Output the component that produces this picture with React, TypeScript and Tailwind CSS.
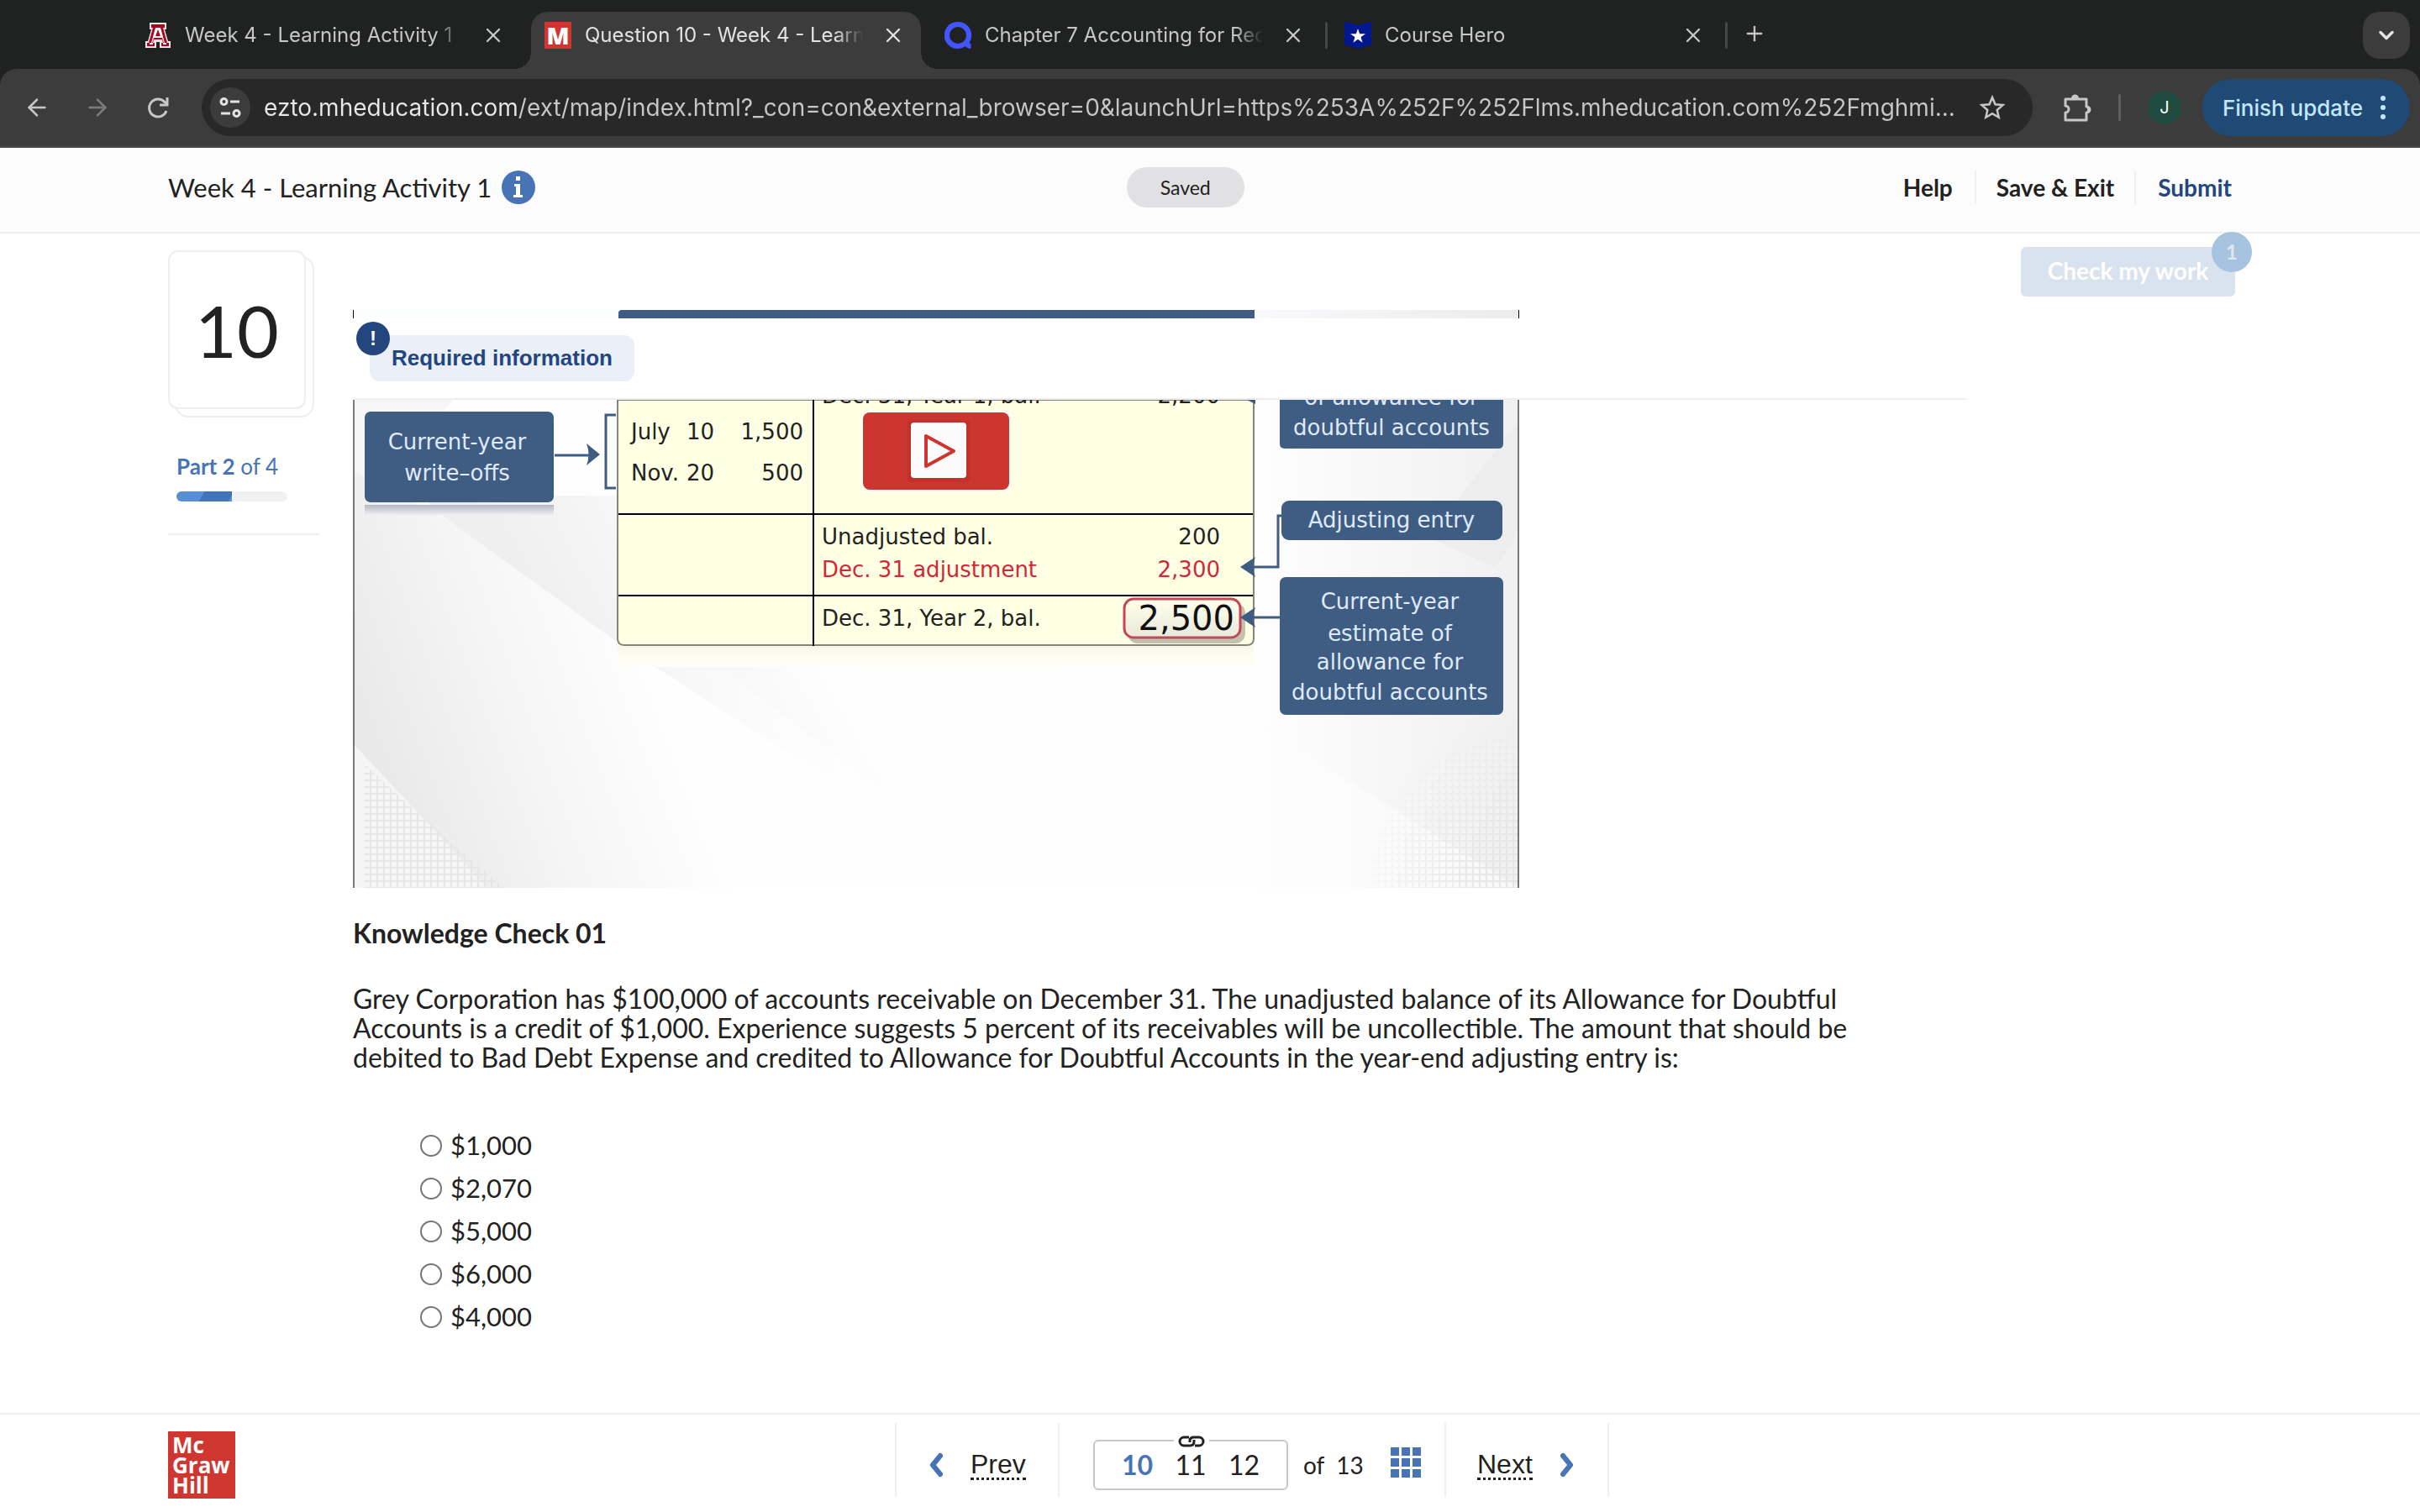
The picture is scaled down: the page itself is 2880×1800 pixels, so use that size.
import React, { useState } from 'react';
import { Plus, X, ChevronDown, ArrowLeft, ArrowRight } from 'lucide-react';

const PAGE_URL =
  'ezto.mheducation.com/ext/map/index.html?_con=con&external_browser=0&launchUrl=https%253A%252F%252Flms.mheducation.com%252Fmghmi...';

const CHOICES = ['$1,000', '$2,070', '$5,000', '$6,000', '$4,000'];

function ArizonaIcon() {
  return (
    <svg viewBox="0 0 32 32" className="h-8 w-8 shrink-0">
      <path d="M6 1h20v8h-2l4 14h3v8H18v-7h-4v7H1v-8h3L8 9H6z" fill="#e9e9e9" />
      <path d="M8 3h16v4h-2l5 18h2v4h-9v-4h2l-1-4H11l-1 4h2v4H3v-4h2L10 7H8z" fill="#ab0520" />
      <path d="M13 7h6l5 18h2v2h-4v-2h1l-2-6H11l-2 6h1v2H6v-2h2z" fill="#fff" />
      <path d="M16 9l3 8h-6z" fill="#ab0520" />
    </svg>
  );
}

function McGrawIcon() {
  return (
    <span className="flex h-8 w-8 shrink-0 items-center justify-center bg-[#cf3630] font-['Open_Sans',sans-serif] text-[28px] leading-8 font-extrabold text-white">
      M
    </span>
  );
}

function QuizletIcon() {
  return (
    <svg viewBox="0 0 32 32" className="h-8 w-8 shrink-0" fill="#4255ff">
      <path fillRule="evenodd" d="M16 0a16 16 0 1 0 9 29c1.500 2 3.500 3 6.500 3v-6c-1 0-1.500-.4-2-1.200A16 16 0 0 0 16 0zm0 6a10 10 0 1 1 0 20 10 10 0 0 1 0-20z" />
    </svg>
  );
}

function CourseHeroIcon() {
  return (
    <svg viewBox="0 0 32 32" className="h-8 w-8 shrink-0">
      <path d="M0 0l16 4 16-4v27l-16 5-16-5z" fill="#00178f" />
      <path d="M16 8l2.100 6.200H25l-5.500 4 2.100 6.500-5.600-4-5.600 4 2.100-6.500-5.500-4h6.900z" fill="#fff" />
    </svg>
  );
}

const TABS = [
  { title: 'Week 4 - Learning Activity 1', icon: <ArizonaIcon />, active: false, divider: false },
  { title: 'Question 10 - Week 4 - Learning', icon: <McGrawIcon />, active: true, divider: false },
  { title: 'Chapter 7 Accounting for Receivables', icon: <QuizletIcon />, active: false, divider: true },
  { title: 'Course Hero', icon: <CourseHeroIcon />, active: false, divider: true },
];

function TabStrip() {
  return (
    <div className="flex h-[82px] items-end pr-3 pl-[156px]">
      {TABS.map((tab) => (
        <React.Fragment key={tab.title}>
          <div
            className={`relative flex h-[68px] min-w-0 flex-1 max-w-[464px] items-center pr-[19px] pb-3 pl-4 ${
              tab.active ? 'rounded-t-[20px] bg-[#3c3c3c] text-[#e3e3e3]' : 'text-[#c7c7c7]'
            }`}
          >
            {tab.active && (
              <>
                <span className="absolute bottom-0 -left-5 h-5 w-5 bg-[radial-gradient(circle_at_0_0,transparent_20px,#3c3c3c_20px)]" />
                <span className="absolute -right-5 bottom-0 h-5 w-5 bg-[radial-gradient(circle_at_100%_0,transparent_20px,#3c3c3c_20px)]" />
              </>
            )}
            {tab.icon}
            <button className="ml-4 min-w-0 flex-1 overflow-hidden mask-r-from-90% text-left text-2xl whitespace-nowrap">{tab.title}</button>
            <button aria-label="Close tab" className="ml-[22px]">
              <X className="h-7 w-7" strokeWidth={2} />
            </button>
          </div>
          <span className="flex h-[68px] w-3 items-center justify-center pb-3">
            {tab.divider && <span className="h-8 w-[3px] rounded bg-[#444746]" />}
          </span>
        </React.Fragment>
      ))}
      <button aria-label="New tab" className="flex h-[68px] w-14 items-center justify-center pb-4 text-[#c7c7c7]">
        <Plus className="h-7 w-7" strokeWidth={2} />
      </button>
      <button aria-label="Search tabs" className="mb-3 ml-auto flex h-14 w-14 items-center justify-center rounded-[20px] bg-[#3c3c3c] text-[#e3e3e3]">
        <ChevronDown className="h-7 w-7" strokeWidth={3} />
      </button>
    </div>
  );
}

function Toolbar() {
  const [url, setUrl] = useState(PAGE_URL);

  return (
    <div className="flex h-[94px] items-center rounded-t-[20px] border-b-2 border-[#4a4a4a] bg-[#3c3c3c] pr-3 pl-7 text-[#c7c7c7]">
      <div className="flex items-center gap-10">
        <button aria-label="Back"><ArrowLeft className="h-8 w-8" strokeWidth={2} /></button>
        <button aria-label="Forward" className="text-[#7c7c7c]"><ArrowRight className="h-8 w-8" strokeWidth={2} /></button>
        <button aria-label="Reload">
          <svg viewBox="0 0 32 32" className="h-8 w-8" fill="none" stroke="currentColor" strokeWidth="3">
            <path d="M26 20a10.500 10.500 0 1 1-2-10.500L27 12" />
            <path d="M27 4v9h-9" />
          </svg>
        </button>
      </div>

      <div className="ml-9 flex h-[68px] flex-1 items-center rounded-full bg-[#282828] pr-8 pl-[10px]">
        <button aria-label="Site information" className="flex h-12 w-12 items-center justify-center rounded-full bg-[#3c3c3c]">
          <svg viewBox="0 0 28 28" className="h-7 w-7" fill="none" stroke="#e3e3e3" strokeWidth="3">
            <circle cx="6.500" cy="7" r="3.500" />
            <path d="M14 7h11M3 21h11" />
            <circle cx="21.500" cy="21" r="3.500" />
          </svg>
        </button>
        <input
          aria-label="Address"
          value={url}
          onChange={(e) => setUrl(e.target.value)}
          className="ml-4 min-w-0 flex-1 bg-linear-to-r from-[#e8e8e8] from-[301px] to-[#c7c7c7] to-[301px] bg-clip-text text-[28px] text-transparent outline-none"
        />
        <button aria-label="Bookmark this tab" className="ml-4">
          <svg viewBox="0 0 32 32" className="h-8 w-8" fill="none" stroke="#c7c7c7" strokeWidth="2.500">
            <path d="M16 4l3.500 8.300 9 .8-6.800 5.900 2 8.800L16 23.200l-7.700 4.600 2-8.800-6.800-5.900 9-.8z" />
          </svg>
        </button>
      </div>

      <button aria-label="Extensions" className="ml-9">
        <svg viewBox="0 0 34 34" className="h-[34px] w-[34px]" fill="none" stroke="#c7c7c7" strokeWidth="3" strokeLinejoin="round">
          <path d="M3 7h25v9a3.500 3.500 0 0 1 0 7v9H3v-9a4 4 0 0 0 0-8z" />
          <path d="M10 6a4.500 4.500 0 0 1 9 0zM29 15a4.500 4.500 0 0 1 0 9z" fill="#c7c7c7" stroke="none" />
        </svg>
      </button>
      <span className="ml-8 h-8 w-[3px] rounded bg-[#5f5f5f]" />
      <button aria-label="Profile" className="ml-8 flex h-10 w-10 items-center justify-center rounded-full bg-[#1f4c3f] text-xl text-white">J</button>
      <button className="ml-[25px] flex h-[68px] items-center gap-5 rounded-full bg-[#1f4a75] pr-7 pl-6 text-[26px] font-medium whitespace-nowrap text-[#c2e7ff]">
        Finish update
        <svg viewBox="0 0 8 30" className="h-[30px] w-2" fill="currentColor">
          <circle cx="4" cy="4" r="3" />
          <circle cx="4" cy="15" r="3" />
          <circle cx="4" cy="26" r="3" />
        </svg>
      </button>
    </div>
  );
}

function AssignmentHeader() {
  return (
    <header className="grid h-[102px] grid-cols-[49fr_auto_51fr] items-center border-b-2 border-[#f0f0f0] bg-[#fcfcfc] pr-[212px] pb-[6px] pl-[200px]">
      <div className="flex items-center gap-3">
        <h1 className="text-[31px] leading-10">Week 4 - Learning Activity 1</h1>
        <button aria-label="Assignment information" className="flex h-10 w-10 items-center justify-center rounded-full bg-[#4874b5]">
          <svg viewBox="0 0 14 28" className="h-7 w-[14px]" fill="#fff">
            <path d="M4 1h5v5H4zM2 10h7v13h3v3H1v-3h3V13H2z" />
          </svg>
        </button>
      </div>
      <span className="flex h-[48px] w-[140px] items-center justify-center rounded-full bg-[#e1e0e3] text-[23px]">Saved</span>
      <nav className="flex items-center justify-end text-[28px] leading-10 font-bold">
        <button className="px-[26px]">Help</button>
        <button className="border-x-2 border-[#f0f0f0] px-6">Save &amp; Exit</button>
        <button className="pr-3 pl-[26px] text-[#23467f]">Submit</button>
      </nav>
    </header>
  );
}

function QuestionCard() {
  return (
    <aside className="w-[180px] shrink-0 pt-5">
      <div className="relative h-[199px] w-[174px]">
        <div className="absolute right-0 bottom-0 h-[192px] w-[166px] rounded-2xl border-2 border-[#eeeeee]" />
        <div className="absolute top-0 left-0 flex h-[189px] w-[164px] items-center justify-center rounded-xl border-2 border-[#eeeeee] bg-white text-[86px]">
          10
        </div>
      </div>
      <div className="border-b-2 border-[#eeeeee] px-[10px] pt-10 pb-[38px]">
        <p className="text-[26px] leading-9 text-[#4874b5]"><b>Part 2</b> of 4</p>
        <div className="mt-3 h-3 w-[132px] overflow-hidden rounded-full bg-[#f1f1f1]">
          <div className="h-full w-1/2 bg-[linear-gradient(120deg,#568fd3_46%,#4175b8_46%,#4175b8_94%,#568fd3_94%)]" />
        </div>
      </div>
    </aside>
  );
}

function Slide() {
  return (
    <svg viewBox="420 476 1388 581" className="block w-[1388px] max-w-full font-['DejaVu_Sans',sans-serif] text-[26px]">
      <defs>
        <linearGradient id="floor" gradientUnits="userSpaceOnUse" x1="440" y1="880" x2="760" y2="760">
          <stop offset="0" stopColor="#e9e9e9" />
          <stop offset="0.5" stopColor="#f5f5f5" />
          <stop offset="1" stopColor="#fefefe" />
        </linearGradient>
        <linearGradient id="beam" gradientUnits="userSpaceOnUse" x1="620" y1="690" x2="860" y2="560">
          <stop offset="0" stopColor="#efefef" />
          <stop offset="1" stopColor="#fefefe" />
        </linearGradient>
        <linearGradient id="beamEnd" gradientUnits="userSpaceOnUse" x1="735" y1="765" x2="1050" y2="980">
          <stop offset="0" stopColor="#fefefe" stopOpacity="0" />
          <stop offset="1" stopColor="#fefefe" />
        </linearGradient>
        <linearGradient id="side" x1="0" y1="0" x2="1" y2="0">
          <stop offset="0" stopColor="#fefefe" />
          <stop offset="1" stopColor="#f0f0f0" />
        </linearGradient>
        <linearGradient id="reflect" x1="0" y1="0" x2="0" y2="1">
          <stop offset="0" stopColor="#b4b6c2" />
          <stop offset="1" stopColor="#f4f4f6" />
        </linearGradient>
        <linearGradient id="fade" x1="0" y1="0" x2="0" y2="1">
          <stop offset="0" stopColor="#f6f6ea" />
          <stop offset="0.5" stopColor="#fdfdf2" />
          <stop offset="1" stopColor="#fefef8" />
        </linearGradient>
        <linearGradient id="total" x1="0" y1="0" x2="0" y2="1">
          <stop offset="0" stopColor="#ffffea" />
          <stop offset="1" stopColor="#e9e9dc" />
        </linearGradient>
        <pattern id="mesh" width="8" height="8" patternUnits="userSpaceOnUse">
          <path d="M0 1h8M1 0v8" stroke="#e6e6e6" strokeWidth="2" />
        </pattern>
        <radialGradient id="meshFade" gradientUnits="userSpaceOnUse" cx="1830" cy="1057" r="210">
          <stop offset="0.3" stopColor="#fff" />
          <stop offset="1" stopColor="#000" />
        </radialGradient>
        <mask id="meshMask">
          <rect x="1600" y="840" width="208" height="217" fill="url(#meshFade)" />
        </mask>
      </defs>

      {/* backdrop */}
      <rect x="420" y="476" width="1388" height="581" fill="#fefefe" />
      <path d="M420 476h120l-120 120z" fill="#f6f6f7" />
      <path d="M500 590h240L1100 830V1000L735 765 530 617z" fill="url(#beam)" />
      <path d="M735 700L1200 1057H735z" fill="url(#beamEnd)" />
      <path d="M420 560L530 617L735 765L1000 1057H420z" fill="url(#floor)" />
      <path d="M420 885Q500 970 580 1057H420z" fill="#f5f5f5" />
      <path d="M434 910Q520 990 600 1057H434z" fill="url(#mesh)" />
      <rect x="1494" y="476" width="314" height="581" fill="url(#side)" />
      <path d="M1700 640L1808 500v130L1780 676z" fill="#ebebec" opacity="0.7" />
      <path d="M1494 860L1808 1057H1494z" fill="#fefefe" opacity="0.6" />
      <rect x="1600" y="840" width="208" height="217" fill="url(#mesh)" mask="url(#meshMask)" />

      {/* T-account */}
      <rect x="735" y="769" width="757" height="25" fill="url(#fade)" />
      <path d="M735 476V760q0 8 8 8H1484q8 0 8-8V476z" fill="#ffffe3" stroke="#85857c" strokeWidth="2" />
      <path d="M736 612H1491M736 709H1491M968 476V769" stroke="#000" strokeWidth="2" />

      <g fill="#222">
        <text x="978" y="480">Dec. 31, Year 1, bal.</text>
        <text x="1452" y="480" textAnchor="end">2,200</text>
        <text x="751" y="523">July</text>
        <text x="850" y="523" textAnchor="end">10</text>
        <text x="956" y="523" textAnchor="end">1,500</text>
        <text x="751" y="572">Nov.</text>
        <text x="850" y="572" textAnchor="end">20</text>
        <text x="956" y="572" textAnchor="end">500</text>
        <text x="978" y="648">Unadjusted bal.</text>
        <text x="1452" y="648" textAnchor="end">200</text>
        <text x="978" y="745">Dec. 31, Year 2, bal.</text>
      </g>
      <g fill="#cf2a37">
        <text x="978" y="687">Dec. 31 adjustment</text>
        <text x="1452" y="687" textAnchor="end">2,300</text>
      </g>

      <rect x="1342" y="718" width="140" height="48" rx="12" fill="#85857c" opacity="0.5" />
      <rect x="1338" y="713" width="138" height="46" rx="11" fill="url(#total)" stroke="#c4485a" strokeWidth="3" />
      <text x="1469" y="750" textAnchor="end" fontSize="40" fill="#111">2,500</text>

      {/* callouts */}
      <g fill="#3f5c82">
        <rect x="434" y="490" width="225" height="108" rx="7" />
        <path d="M1523 476h266v52q0 6-6 6h-254q-6 0-6-6z" />
        <rect x="1525" y="596" width="263" height="47" rx="9" />
        <rect x="1523" y="687" width="266" height="164" rx="7" />
        <path d="M714 541l-16-13q5 13 0 26z" />
        <path d="M1476 675l18-12q-5 12 0 24z" />
        <path d="M1476 735l18-12q-5 12 0 24z" />
        <path d="M1484 476h10v5z" />
      </g>
      <rect x="434" y="601" width="225" height="13" fill="url(#reflect)" />
      <g fill="none" stroke="#3f5c82" strokeWidth="3">
        <path d="M660 542h44M733 494H721V581H733M1525 614H1521V675H1486M1523 735H1486" />
      </g>
      <g fill="#dfeafa" textAnchor="middle">
        <text x="544" y="535">Current-year</text>
        <text x="544" y="572">write–offs</text>
        <text x="1656" y="482">of allowance for</text>
        <text x="1656" y="518">doubtful accounts</text>
        <text x="1656" y="628">Adjusting entry</text>
        <text x="1654" y="725">Current-year</text>
        <text x="1654" y="763">estimate of</text>
        <text x="1654" y="797">allowance for</text>
        <text x="1654" y="833">doubtful accounts</text>
      </g>

      {/* play button */}
      <rect x="1025" y="489" width="178" height="96" rx="9" fill="#fff" />
      <rect x="1027" y="491" width="174" height="92" rx="8" fill="#cd352f" />
      <rect x="1080" y="500" width="74" height="74" rx="4" fill="#b8302b" opacity="0.5" />
      <rect x="1084" y="503" width="66" height="66" rx="4" fill="#fbfbfb" />
      <path d="M1102 519v36l33-18z" fill="none" stroke="#cd352f" strokeWidth="4" strokeLinejoin="round" />

      <path d="M421 476V1057M1807 476V1057" stroke="#000" strokeWidth="1" />
    </svg>
  );
}

function Question() {
  const [answer, setAnswer] = useState('');

  return (
    <article className="min-w-0 flex-1 pt-[91px]">
      {/* sliver of the slide above the pinned notice */}
      <div className="flex h-[10px] w-[1388px] max-w-full border-x border-black">
        <span className="flex-[315] bg-[#fcfdfd]" />
        <span className="flex-[757] rounded-tl-sm bg-[#3f5c82]" />
        <span className="flex-[314] bg-linear-to-r from-[#f8f9fb] to-[#ececec]" />
      </div>

      <div className="h-[97px] border-b-2 border-[#eeeeee] bg-white pt-5 pl-5">
        <div className="relative flex h-[55px] w-[315px] items-center rounded-xl bg-[#ebf0f8] pl-[26px] font-['Liberation_Sans',sans-serif] text-[26px] font-bold text-[#23467f]">
          <span className="absolute -top-4 -left-4 flex h-10 w-10 items-center justify-center rounded-full bg-[#23467f] text-2xl text-white">!</span>
          Required information
        </div>
      </div>

      <Slide />

      <h2 className="mt-[34px] text-[32px] leading-10 font-bold">Knowledge Check 01</h2>
      <p className="mt-10 text-[32px] leading-[35px]">
        Grey Corporation has $100,000 of accounts receivable on December 31. The unadjusted balance of its Allowance for Doubtful
        <br />
        Accounts is a credit of $1,000. Experience suggests 5 percent of its receivables will be uncollectible. The amount that should be
        <br />
        debited to Bad Debt Expense and credited to Allowance for Doubtful Accounts in the year-end adjusting entry is:
      </p>

      <div role="radiogroup" aria-label="Answer choices" className="mt-[62px] pb-[60px] pl-20">
        {CHOICES.map((choice) => (
          <label key={choice} className="flex h-[51px] items-center gap-[10px] text-[31px]">
            <input
              type="radio"
              name="answer"
              value={choice}
              checked={answer === choice}
              onChange={() => setAnswer(choice)}
              className="h-[26px] w-[26px] appearance-none rounded-full border-2 border-[#767676] bg-white checked:border-8"
            />
            {choice}
          </label>
        ))}
      </div>
    </article>
  );
}

function Footer() {
  return (
    <footer className="grid h-[118px] grid-cols-[1fr_auto_1fr] items-start border-t-2 border-[#f0f0f0] bg-white pt-[10px] pr-[100px] pl-[200px]">
      <div className="mt-[10px] flex h-20 w-20 flex-col justify-center bg-[#cf3630] pl-[5px] font-['Open_Sans',sans-serif] text-[26px] leading-6 font-bold text-white">
        <span>Mc</span>
        <span>Graw</span>
        <span>Hill</span>
      </div>

      <nav className="flex h-[88px] items-stretch border-x-2 border-[#f0f0f0] text-[32px]">
        <a href="#prev" className="flex w-[192px] items-center gap-8 pt-3 pl-[38px] font-['Liberation_Sans',sans-serif]">
          <svg viewBox="0 0 18 30" className="h-[30px] w-[18px]" fill="none" stroke="#4874b5" strokeWidth="6" strokeLinecap="round" strokeLinejoin="round">
            <path d="M14 4L5 15l9 11" />
          </svg>
          <span className="border-b-3 border-dotted border-[#222] leading-8">Prev</span>
        </a>
        <div className="flex w-[462px] items-center border-x-2 border-[#f0f0f0] pt-3 pl-10">
          <div className="relative flex h-[60px] w-[232px] items-center justify-between rounded-md border-2 border-[#c8c8c8] px-8">
            <a href="#q10" className="font-bold text-[#4874b5]">10</a>
            <a href="#q11">11</a>
            <a href="#q12">12</a>
            <span className="absolute -top-2 left-[94px] bg-white px-1">
              <svg viewBox="0 0 34 16" className="h-4 w-[34px]" fill="none" stroke="#222" strokeWidth="3">
                <path d="M14 3H8a5 5 0 0 0 0 10h7q5 0 5-5V6" />
                <path d="M21 13h5a5 5 0 0 0 0-10h-6q-5 0-5 4v2" />
              </svg>
            </span>
          </div>
          <p className="ml-[18px] text-[28px] whitespace-pre">of  13</p>
          <button aria-label="All questions" className="mb-[6px] ml-8">
            <svg viewBox="0 0 36 36" className="h-9 w-9" fill="#4874b5">
              {[0, 13, 26].map((y) => [0, 13, 26].map((x) => <rect key={`${x}-${y}`} x={x} y={y} width="10" height="10" />))}
            </svg>
          </button>
        </div>
        <a href="#next" className="flex w-[192px] items-center gap-8 pt-3 pl-[37px] font-['Liberation_Sans',sans-serif]">
          <span className="border-b-3 border-dotted border-[#222] leading-8">Next</span>
          <svg viewBox="0 0 18 30" className="h-[30px] w-[18px]" fill="none" stroke="#4874b5" strokeWidth="6" strokeLinecap="round" strokeLinejoin="round">
            <path d="M4 4l9 11-9 11" />
          </svg>
        </a>
      </nav>
    </footer>
  );
}

export default function App() {
  return (
    <div className="flex min-h-screen flex-col bg-white font-['Lato',sans-serif] text-[#222]">
      <div className="bg-[#1f2221] font-['Inter',sans-serif]">
        <TabStrip />
        <Toolbar />
      </div>
      <AssignmentHeader />
      <main className="flex flex-1 items-start pr-[220px] pl-[200px]">
        <QuestionCard />
        <div className="w-10 shrink-0" />
        <Question />
        <button disabled className="relative mt-4 ml-[65px] h-[59px] w-[255px] shrink-0 rounded-md bg-[#d9e3f0] pb-1 text-[28px] font-bold text-white">
          Check my work
          <span className="absolute -top-[18px] -right-5 flex h-12 w-12 items-center justify-center rounded-full bg-[#a6c4df] text-2xl text-[#dbe7f3]">1</span>
        </button>
      </main>
      <Footer />
    </div>
  );
}
